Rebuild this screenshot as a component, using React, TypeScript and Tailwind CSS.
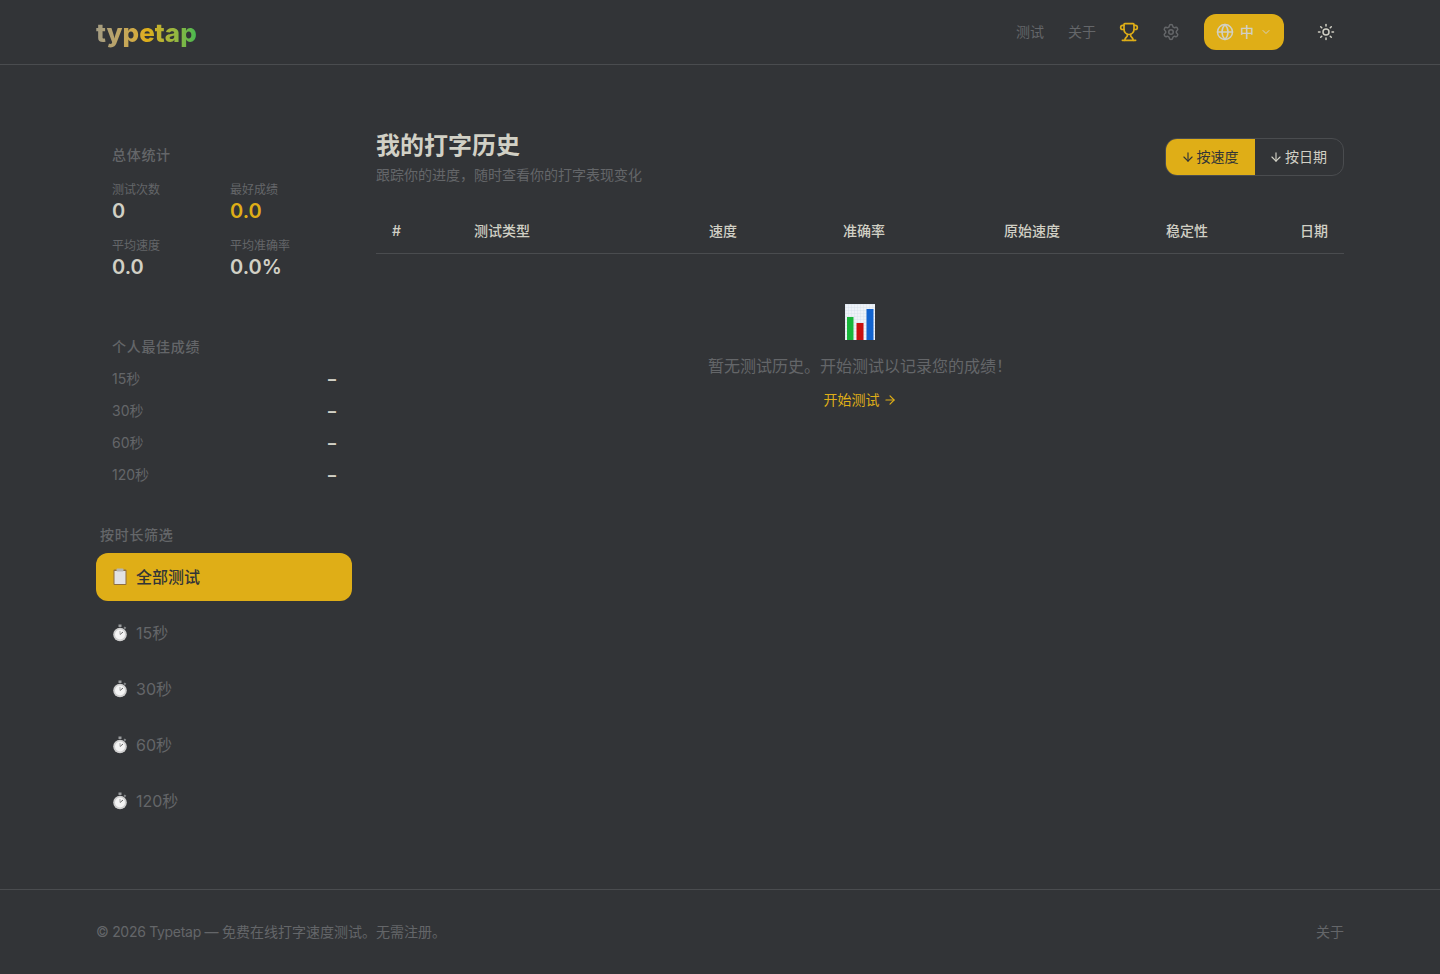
import React from 'react';
import { ArrowDown, ArrowRight, ChevronDown, Globe, Settings, Sun, Trophy } from 'lucide-react';

const Stopwatch = () => (
  <svg width="16" height="18" viewBox="0 0 16 18" className="shrink-0">
    <rect x="6.5" y="0.5" width="3" height="2.5" fill="#9a9c9e" />
    <rect x="11.8" y="3" width="2" height="2" fill="#8a8c8e" transform="rotate(40 13 4)" />
    <circle cx="8" cy="10.5" r="6.8" fill="#cfcfcf" />
    <circle cx="8" cy="10.5" r="5" fill="#f4f4f4" />
    <path d="M8 10.5 L11 8" stroke="#666" strokeWidth="1" />
    <path d="M8 10.5 L8 7" stroke="#999" strokeWidth="0.8" />
  </svg>
);

const Clipboard = () => (
  <svg width="16" height="18" viewBox="0 0 16 18" className="shrink-0">
    <rect x="1.5" y="1.5" width="13" height="15.5" rx="1" fill="#8f6f3f" />
    <rect x="2.5" y="3" width="11" height="13" fill="#e2e2e4" />
    <rect x="4.5" y="0.5" width="7" height="3" rx="1" fill="#b5b5b5" />
  </svg>
);

const BarChart = () => (
  <svg width="30" height="36" viewBox="0 0 30 36">
    <defs>
      <pattern id="chartgrid" width="3" height="3" patternUnits="userSpaceOnUse">
        <rect width="3" height="3" fill="#eef2f8" />
        <path d="M3 0H0V3" fill="none" stroke="#ccd8e8" strokeWidth="0.6" />
      </pattern>
    </defs>
    <rect width="30" height="36" fill="url(#chartgrid)" />
    <rect x="2" y="13" width="6.5" height="23" fill="#18b53a" />
    <rect x="11.5" y="19" width="7" height="17" fill="#c80f0f" />
    <rect x="21.5" y="5" width="7" height="31" fill="#1264d0" />
  </svg>
);

const Stat = ({ label, value, accent }: { label: string; value: string; accent?: boolean }) => (
  <div>
    <div className="mt-px text-xs leading-4 text-[#646669]">{label}</div>
    <div className={`text-xl leading-[27px] font-semibold ${accent ? 'text-[#dfae17]' : 'text-[#d1d0c5]'}`}>{value}</div>
  </div>
);

const bests = ['15秒', '30秒', '60秒', '120秒'];

export default function App() {
  return (
    <div className="min-h-[974px] flex flex-col bg-[#323437] text-[#d1d0c5] font-['Inter','Noto_Sans_CJK_SC',sans-serif]">
      <header className="h-[65px] border-b border-[#4a4c4f]">
        <div className="w-[1248px] mx-auto h-full flex items-center justify-between">
          <div className="mt-0.5 text-[26px] leading-8 font-extrabold bg-gradient-to-r from-[#a39c83] via-[#dfae17] to-[#3fb950] bg-clip-text text-transparent">
            typetap
          </div>
          <nav className="flex items-center -mt-[1px]">
            <a className="text-sm text-[#646669]">测试</a>
            <a className="ml-6 text-sm text-[#646669]">关于</a>
            <Trophy size={20} className="ml-[23px] text-[#dfae17]" />
            <Settings size={18} className="ml-[23px] text-[#646669]" />
            <div className="ml-6 w-20 h-9 rounded-xl bg-[#dfae17] flex items-center pl-3 text-[#d1d0c5]">
              <Globe size={18} />
              <span className="ml-1.5 text-sm font-medium">中</span>
              <ChevronDown size={12} className="ml-1.5" />
            </div>
            <div className="ml-8 mr-2 w-5 flex justify-center">
              <Sun size={18} />
            </div>
          </nav>
        </div>
      </header>

      <main className="flex-1 w-[1248px] mx-auto flex gap-6 pt-16">
        <aside className="w-64 shrink-0">
          <section className="px-4 pt-4">
            <h3 className="text-sm leading-5 font-medium tracking-wider text-[#646669] mb-4">总体统计</h3>
            <div className="grid grid-cols-2 gap-x-3 gap-y-3">
              <Stat label="测试次数" value="0" />
              <Stat label="最好成绩" value="0.0" accent />
              <Stat label="平均速度" value="0.0" />
              <Stat label="平均准确率" value="0.0%" />
            </div>
          </section>

          <section className="px-4 mt-14">
            <h3 className="text-sm leading-5 font-medium tracking-wider text-[#646669] mb-3">个人最佳成绩</h3>
            <div className="flex flex-col gap-3">
              {bests.map(b => (
                <div key={b} className="flex justify-between items-center h-5 text-sm">
                  <span className="text-[#646669]">{b}</span>
                  <span className="text-base leading-5 font-bold text-[#d1d0c5]">–</span>
                </div>
              ))}
            </div>
          </section>

          <section className="mt-10">
            <h3 className="px-1 mb-2 text-sm leading-5 font-medium tracking-wider text-[#646669]">按时长筛选</h3>
            <div className="flex flex-col gap-2">
              <button className="h-12 rounded-xl bg-[#dfae17] text-[#323437] font-medium flex items-center gap-2 px-4 text-base">
                <Clipboard />
                全部测试
              </button>
              {['15秒', '30秒', '60秒', '120秒'].map(t => (
                <button key={t} className="h-12 rounded-xl text-[#646669] flex items-center gap-2 px-4 text-base">
                  <Stopwatch />
                  {t}
                </button>
              ))}
            </div>
          </section>
        </aside>

        <div className="flex-1 min-w-0">
          <div className="flex items-center justify-between mb-6">
            <div className="pt-px">
              <h1 className="text-2xl font-semibold leading-8">我的打字历史</h1>
              <p className="mt-[3px] text-sm leading-5 text-[#646669]">跟踪你的进度，随时查看你的打字表现变化</p>
            </div>
            <div className="flex h-[38px] rounded-xl border border-[#4a4c4f] overflow-hidden text-sm">
              <button className="w-[89px] pr-0.5 bg-[#dfae17] text-[#323437] flex items-center justify-center gap-0.5">
                <ArrowDown size={14} />
                按速度
              </button>
              <button className="w-[88px] pr-0.5 text-[#d1d0c5] flex items-center justify-center gap-0.5">
                <ArrowDown size={14} />
                按日期
              </button>
            </div>
          </div>

          <table className="w-full table-fixed text-sm">
            <thead>
              <tr className="h-11 border-b border-[#4a4c4f] text-[#d1d0c5]">
                <th className="w-[82px] px-4 text-left font-medium">#</th>
                <th className="w-[190px] px-4 text-left font-medium">测试类型</th>
                <th className="w-[105px] px-4 text-right font-medium">速度</th>
                <th className="w-[148px] px-4 text-right font-medium">准确率</th>
                <th className="w-[175px] px-4 text-right font-medium">原始速度</th>
                <th className="w-[148px] px-4 text-right font-medium">稳定性</th>
                <th className="w-[120px] px-4 text-right font-medium">日期</th>
              </tr>
            </thead>
          </table>

          <div className="flex flex-col items-center pt-[50px]">
            <BarChart />
            <p className="mt-[14px] text-base leading-6 text-[#646669]">暂无测试历史。开始测试以记录您的成绩！</p>
            <a className="mt-3 flex items-center gap-[3px] text-sm leading-5 text-[#dfae17]">
              开始测试
              <ArrowRight size={14} />
            </a>
          </div>
        </div>
      </main>

      <footer className="h-[85px] border-t border-[#4a4c4f]">
        <div className="w-[1248px] mx-auto h-full flex items-center justify-between text-sm text-[#646669]">
          <span>
            <span className="tracking-[-0.3px]">© 2026 Typetap — </span>免费在线打字速度测试。无需注册。
          </span>
          <a>关于</a>
        </div>
      </footer>
    </div>
  );
}
